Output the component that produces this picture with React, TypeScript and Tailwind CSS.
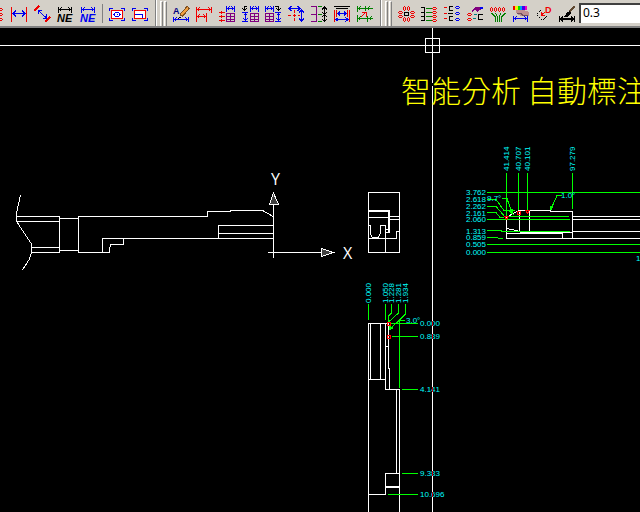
import type { ReactNode } from 'react';

const RED = '#f00000';
const BLUE = '#0000f0';
const BLACK = '#000000';
const GREEN = '#008000';
const PURPLE = '#800080';

type Tool = { label: string; art: ReactNode };

// horizontal dimension with end ticks
const Dim = ({ x1, x2, y, c, h = 3 }: { x1: number; x2: number; y: number; c: string; h?: number }) => (
  <path
    stroke={c}
    d={`M${x1} ${y - h}V${y + h}M${x2} ${y - h}V${y + h}M${x1} ${y}H${x2}M${x1 + 3} ${y - 2}L${x1 + 1} ${y}L${x1 + 3} ${y + 2}M${x2 - 3} ${y - 2}L${x2 - 1} ${y}L${x2 - 3} ${y + 2}`}
  />
);

const Grid = ({ x }: { x: number }) => (
  <path stroke={PURPLE} d={`M${x} 13.5H${x + 8}V21.5H${x}ZM${x + 4} 13V21M${x} 16.5H${x + 8}M${x} 19.5H${x + 8}`} />
);

const Corners = () => (
  <path stroke={BLUE} d="M3.5 11V8.5H7M15 8.5H18.5V11M18.5 18V20.5H15M7 20.5H3.5V18" />
);

// flat rings, 5 wide and 3 high
const Rings = ({ x, ys, c }: { x: number; ys: number[]; c: string }) => (
  <>
    {ys.map((y) => (
      <path key={y} stroke={c} d={`M${x - 1} ${y - 0.5}h3M${x - 1} ${y + 1.5}h3M${x - 2} ${y + 0.5}h1M${x + 2} ${y + 0.5}h1`} />
    ))}
  </>
);

// upright rings, 3 wide and 5 high
const Drops = ({ xs, y, c }: { xs: number[]; y: number; c: string }) => (
  <>
    {xs.map((x) => (
      <path key={x} stroke={c} d={`M${x - 0.5} ${y - 1}v3M${x + 1.5} ${y - 1}v3M${x + 0.5} ${y - 2}v1M${x + 0.5} ${y + 2}v1`} />
    ))}
  </>
);

const NeArt = ({ c }: { c: string }) => (
  <>
    <Dim x1={4.5} x2={17.5} y={9.5} c={c} />
    <text x="3" y="22" fill={c} stroke="none" className="font-['Liberation_Sans'] text-[11px] font-bold italic">
      NE
    </text>
  </>
);

const dimensionTools: Tool[] = [
  {
    label: 'Linear dimension',
    art: (
      <>
        <path stroke={RED} d="M3.5 7V22M18.5 7V22" />
        <path stroke={BLUE} d="M4 13.5H18M8 10.5L5 13.5L8 16.5M14 10.5L17 13.5L14 16.5" />
      </>
    ),
  },
  {
    label: 'Aligned dimension',
    art: (
      <>
        <path stroke={RED} d="M3 11L8 6M14 22L19 17" strokeWidth="1.5" />
        <path stroke={BLUE} d="M7 10.5L15.5 18M7 14V10.5H11M15.5 14V18H12" />
      </>
    ),
  },
  { label: 'Dimension NE', art: <NeArt c={BLACK} /> },
  { label: 'Dimension NE blue', art: <NeArt c={BLUE} /> },
];

const frameTools: Tool[] = [
  {
    label: 'Frame hole',
    art: (
      <>
        <Corners />
        <rect x="5.5" y="10.5" width="11" height="8" fill="#fff" stroke={RED} />
        <path stroke={BLUE} d="M9.5 12.5H12.5L14 14.5L12.5 16.5H9.5L8 14.5ZM10.5 14.5H11.5" />
      </>
    ),
  },
  {
    label: 'Frame step',
    art: (
      <>
        <Corners />
        <rect x="5.5" y="10.5" width="11" height="8" fill="#fff" stroke={RED} />
        <path stroke={BLUE} d="M6 14.5H13.5V18" />
      </>
    ),
  },
];

const editTools: Tool[] = [
  {
    label: 'Edit dimension text',
    art: (
      <>
        <text x="3" y="14" fill="#000080" stroke="none" className="font-['Liberation_Sans'] text-[9px] font-bold">
          A
        </text>
        <path stroke="#805020" strokeWidth="4" d="M11 16L18.5 7" />
        <path stroke="#f0a040" strokeWidth="2" d="M11.5 15L18 7.5" />
        <path stroke={BLACK} d="M8.5 18.5L11 17" />
        <Dim x1={3.5} x2={18.5} y={19.5} c={BLUE} h={2.5} />
      </>
    ),
  },
  {
    label: 'Baseline dimension',
    art: (
      <>
        <path stroke={RED} d="M3.5 7V22M13.5 13V22" />
        <Dim x1={3.5} x2={18.5} y={9.5} c={RED} />
        <Dim x1={3.5} x2={13.5} y={16.5} c={RED} />
      </>
    ),
  },
  {
    label: 'Ordinate left',
    art: (
      <>
        <Dim x1={10.5} x2={18.5} y={8.5} c={BLUE} />
        <Grid x={10.5} />
        <path stroke={RED} d="M3 12.5H9M3 16.5H9M3 20.5H9M5.5 11V14M5.5 15V18M5.5 19V22" />
      </>
    ),
  },
  {
    label: 'Ordinate turn left',
    art: (
      <>
        <Dim x1={11.5} x2={19.5} y={8.5} c={BLUE} />
        <Grid x={11.5} />
        <path stroke={BLACK} d="M8 6.5H5.5V10.5M3.5 8.5L5.5 10.5L7.5 8.5" />
        <path stroke={BLUE} d="M3 12.5H9M3 21.5H9M6.5 13V21M4.5 15.5L6.5 13.5L8.5 15.5M4.5 18.5L6.5 20.5L8.5 18.5" />
      </>
    ),
  },
  {
    label: 'Ordinate turn right',
    art: (
      <>
        <Dim x1={3.5} x2={11.5} y={8.5} c={BLUE} />
        <Grid x={3.5} />
        <path stroke={BLACK} d="M13 6.5H16.5V10.5M14.5 8.5L16.5 10.5L18.5 8.5" />
        <path stroke={BLUE} d="M13 12.5H19M13 21.5H19M16.5 13V21M14.5 15.5L16.5 13.5L18.5 15.5M14.5 18.5L16.5 20.5L18.5 18.5" />
      </>
    ),
  },
  {
    label: 'Center offset',
    art: (
      <>
        <path stroke={BLUE} d="M4 8.5H15M6.5 6L4 8.5L6.5 11M12.5 6L15 8.5L12.5 11M16.5 10V21M14 12.5L16.5 10L19 12.5M14 18.5L16.5 21L19 18.5" />
        <path stroke={RED} d="M9.5 10V13M9.5 14V17M9.5 18V21M3 15.5H6M8 15.5H11M13 15.5H15" />
      </>
    ),
  },
  {
    label: 'Chain vertical',
    art: (
      <>
        <path stroke={PURPLE} d="M3 6.5H8.5V21.5H3M3 14.5H8" />
        <path stroke={GREEN} d="M10 6.5H14M10 14.5H14M10 21.5H14" />
        <path stroke={BLACK} d="M16.5 7V21M14 9.5L16.5 7L19 9.5M14 12L16.5 14.5L19 12M14 17L16.5 14.5L19 17M14 19L16.5 21.5L19 19" />
      </>
    ),
  },
  {
    label: 'Overall width',
    art: (
      <>
        <path stroke={BLACK} d="M3 6.5H19M5 8.5H17" />
        <path stroke={RED} d="M3.5 10V22M5.5 10V17M16.5 10V17M18.5 10V22" />
        <path stroke={BLUE} d="M7 13.5H15M9 11.5L7 13.5L9 15.5M13 11.5L15 13.5L13 15.5M5 19.5H17M7.5 17.5L5 19.5L7.5 21.5M14.5 17.5L17 19.5L14.5 21.5" />
      </>
    ),
  },
  {
    label: 'Split dimensions',
    art: (
      <>
        <path stroke={GREEN} d="M3.5 6V12M3.5 15V22M11.5 6V11M13.5 16V22M4 8.5H19M6.5 6.5L4.5 8.5L6.5 10.5M15.5 6.5L13.5 8.5L15.5 10.5M4 18.5H19M6.5 16.5L4.5 18.5L6.5 20.5M17.5 16.5L15.5 18.5L17.5 20.5" />
        <path stroke={RED} d="M6.5 17.5L12 12M7.5 12.5H12.5V17" />
      </>
    ),
  },
];

const annotateTools: Tool[] = [
  {
    label: 'Radial balloons',
    art: (
      <>
        <rect x="9.5" y="12.5" width="4" height="3" stroke={BLACK} />
        <Drops xs={[9, 13]} y={8} c={RED} />
        <Drops xs={[9, 13]} y={19} c={RED} />
        <Rings x={5} ys={[12, 16]} c={RED} />
        <Rings x={17} ys={[12, 16]} c={RED} />
      </>
    ),
  },
  {
    label: 'Balloon column',
    art: (
      <>
        <path stroke={BLACK} d="M3 7.5H6.5V20.5H3M3 12.5H6M3 16.5H6" />
        <path stroke={GREEN} d="M8 8.5H14M8 12.5H14M8 16.5H14M8 20.5H14" />
        <Rings x={16} ys={[8, 12, 16, 20]} c={RED} />
      </>
    ),
  },
  {
    label: 'Balloon list',
    art: (
      <>
        <path stroke={RED} d="M3 7.5H6M3 13.5H6M3 18.5H6" />
        <path stroke={BLACK} d="M12 6.5H8.5V10.5H12M7 13.5H12M12 16.5H8.5V20.5H12" />
        <Rings x={16} ys={[7, 13, 19]} c={BLUE} />
      </>
    ),
  },
  {
    label: 'Pick balloons',
    art: (
      <>
        <path fill={PURPLE} stroke="none" d="M7 11L11 7H16L18 9L15 10L13 12L11 10L8 12Z" />
        <path stroke={BLUE} strokeWidth="2" d="M16 8H19" />
        <path stroke="#008080" d="M10 14.5H13M9 18.5H12" />
        <path stroke={BLACK} d="M19 14.5H14.5V19.5H19" />
        <Rings x={5} ys={[14, 19]} c={RED} />
      </>
    ),
  },
  {
    label: 'Fan balloons',
    art: (
      <>
        <Drops xs={[4, 8, 12, 16]} y={9} c={RED} />
        <path stroke={GREEN} d="M4.5 13L8.5 17V22M8.5 13L10.5 17V22M13.5 13L12.5 17V22M18.5 13L14.5 17V22" />
      </>
    ),
  },
  {
    label: 'Dimension colour',
    art: (
      <>
        <path stroke={RED} strokeWidth="4" d="M3 8H5" />
        <path stroke="#f0f000" strokeWidth="4" d="M5 8H8" />
        <path stroke="#00e000" strokeWidth="4" d="M8 8H10" />
        <path stroke="#00a0f0" strokeWidth="4" d="M10 8H12" />
        <path stroke="#4000f0" strokeWidth="4" d="M12 8H15" />
        <path stroke="#f000c0" strokeWidth="4" d="M15 8H17" />
        <path fill="#c09090" stroke="none" d="M6 10H14L19 12V16H11L6 13Z" />
        <path stroke="#705060" d="M7 13.5H11L13 15.5H18" />
        <Dim x1={3.5} x2={17.5} y={18.5} c={BLUE} />
      </>
    ),
  },
  {
    label: 'Diameter note',
    art: (
      <>
        <path stroke={BLACK} strokeDasharray="2 1" d="M7.5 10.5L3.5 14.5L9.5 20.5L13.5 16.5" />
        <path stroke={RED} d="M8 15.5L12.5 11.5M8.5 12V15.5H12" />
        <text x="12" y="13" fill={RED} stroke="none" className="font-['Liberation_Sans'] text-[9px] font-bold">
          D
        </text>
      </>
    ),
  },
  {
    label: 'Dimension brush',
    art: (
      <>
        <path stroke="#604830" strokeWidth="2" d="M18.5 6L13.5 12" />
        <path fill={BLACK} stroke="none" d="M14 11L15 13L12 17L7 17L10 15L11 12Z" />
        <path stroke={BLACK} strokeWidth="1.5" d="M3.5 16V22M18.5 16V22M3.5 19H18.5M7 17L4.5 19L7 21M15 17L17.5 19L15 21" />
      </>
    ),
  },
];

const Art = ({ children }: { children: ReactNode }) => (
  <svg width="23" height="25" viewBox="0 0 23 25" fill="none" strokeWidth="1" shapeRendering="crispEdges" className="shrink-0">
    {children}
  </svg>
);

const ToolButtons = ({ tools }: { tools: Tool[] }) => (
  <>
    {tools.map((tool) => (
      <button key={tool.label} type="button" aria-label={tool.label} className="h-[25px] shrink-0">
        <Art>{tool.art}</Art>
      </button>
    ))}
  </>
);

const Grip = () => (
  <div className="flex shrink-0 gap-px px-[3px] pt-px">
    <span className="w-[3px] border-t border-r border-l border-t-white border-r-[#808080] border-l-white bg-[#d4d0c8]" />
    <span className="w-[3px] border-t border-r border-l border-t-white border-r-[#808080] border-l-white bg-[#d4d0c8]" />
  </div>
);

const Toolbar = () => (
  <header className="flex h-7 shrink-0 overflow-hidden border-b-2 border-[#808080] bg-[#d4d0c8]">
    <div className="flex shrink-0 border-r border-[#808080] pr-[3px]">
      <button type="button" aria-label="Stacked balloons" className="flex h-[25px] w-2 shrink-0 justify-end overflow-hidden">
        <Art>
          <Rings x={15} ys={[9, 14, 19]} c={RED} />
        </Art>
      </button>
      <ToolButtons tools={dimensionTools} />
      <span className="mt-1 mr-[3px] ml-0.5 h-[19px] w-px shrink-0 bg-[#808080]" />
      <ToolButtons tools={frameTools} />
    </div>
    <div className="flex shrink-0 border-r border-l border-r-[#808080] border-l-white pr-[3px]">
      <Grip />
      <ToolButtons tools={editTools} />
    </div>
    <div className="flex min-w-0 flex-1 border-l border-white">
      <Grip />
      <ToolButtons tools={annotateTools} />
      <input
        aria-label="Dimension scale"
        defaultValue="0.3"
        className="mt-[3px] h-5 min-w-0 flex-1 border-t-2 border-l-2 border-[#404040] bg-white pb-[3px] pl-0.5 font-['Noto_Sans'] text-[12px] leading-4 text-black outline-none"
      />
    </div>
  </header>
);

const verticalLabels = [
  { x: 509, y: 171, text: '41.414' },
  { x: 521, y: 171, text: '40.707' },
  { x: 530, y: 171, text: '40.101' },
  { x: 575, y: 171, text: '97.279' },
];

const sectionLabels = [
  { x: 371, text: '0.000' },
  { x: 388, text: '1.050' },
  { x: 394, text: '1.228' },
  { x: 401, text: '1.281' },
  { x: 408, text: '1.934' },
];

const heightLabels = [
  { y: 195, text: '3.762' },
  { y: 202, text: '2.618' },
  { y: 209, text: '2.262' },
  { y: 216, text: '2.161' },
  { y: 222, text: '2.060' },
  { y: 234, text: '1.313' },
  { y: 240, text: '0.859' },
  { y: 247, text: '0.505' },
  { y: 255, text: '0.000' },
];

const depthLabels = [
  { y: 326, text: '0.000' },
  { y: 339, text: '0.889' },
  { y: 392, text: '4.141' },
  { y: 476, text: '9.383' },
  { y: 497, text: '10.696' },
];

const Drawing = () => (
  <svg viewBox="0 28 640 484" className="block w-full bg-black" fill="none" shapeRendering="crispEdges">
    <g stroke="#ffffff">
      {/* side view */}
      <path d="M20.5 195L18.5 204L16.5 213V221L19.5 226L25.5 235L31.5 244V252L29.5 259L22.5 270" />
      <path d="M17 216.5H59.5V252.5H31M17 221.5H59M31 247.5H59M59 218.5H78M59 250.5H78" />
      <path d="M207.5 216.5H78.5V252.5H109.5V249L110.5 244.5H123.5V238.5M102.5 252V238.5H273" />
      <path d="M207.5 217V211.5H230V210.5H262.5L273 216.5M218.5 238V225.5H273M218 233.5H273" />
      {/* axes */}
      <path d="M273.5 204V258M268 252.5H321" />
      <path fill="#404040" d="M273.5 193L269.5 204.5H278.5ZM333 252.5L321.5 248.5V256.5Z" />
      {/* front view */}
      <path d="M368.5 192.5H399.5V252.5H368.5ZM368 217.5H388M389 216.5H399M389 219.5H399M368 238.5H396.5V231.5H399" />
      <path strokeWidth="2" d="M368 211H389V233" />
      <path d="M368 225.5H370.5V234L372.5 237.5H378.5L380.5 233V225.5H385.5V252M385 229.5H388M385 232.5H389" />
      {/* bottom view */}
      <path d="M368.5 512V323.5H388.5V368H389.5V389M370.5 323V379M380.5 323V379M368 379.5H385M385.5 323V389.5H399.5V512M385 346.5H388M396.5 389V473M399 473.5H385.5V494.5H368" />
      <path strokeWidth="2" d="M385 487H399" />
      {/* tip detail */}
      <path d="M506.5 238V218L511 214.5L519 210.5H550V211.5H572.5V238M519.5 211V231M529.5 211V232M572 216.5H640M572 219.5H640M572 231.5H640M520 232.5H572M506 238.5H640M506 233.5H562.5V238M506 228.5L512 229.5L520 231.5" />
    </g>

    <g stroke="#00ff00">
      <path d="M506.5 173V217M518.5 173V210M527.5 173V210M572.5 173V209" />
      <path d="M487 192.5H640M508 216.5H569M487 219.5H570M487 230.5H500L503 231.5H570M487 237.5H497L499 238.5H503M487 244.5H640M487 252.5H640" />
      <path d="M487 199.5H496L504 210.5H515M487 206.5H496L506 218M487 212.5H496L500 217.5H504M502 198.5H507L512 213M562 195.5H557L551 209" />
      <path fill="#00ff00" d="M551 210L550.5 206L553 206ZM513 214L509 211L512 209Z" />
      <path d="M368.5 304V320M385.5 304V320M391.5 304V313L388.5 316V323M398.5 304V313L388.5 322M405.5 304V314L390 329M405 320.5H399.5V388M399 320.5L391 328" />
      <path d="M391 323.5H418M392 336.5H418M402 389.5H418M402 473.5H418M388 494.5H418" />
      <path fill="#00ff00" d="M389.5 329.5V326L392.5 328Z" />
    </g>
    <path stroke="#ff0000" d="M387.5 322.5H390.5V325H387.5ZM387.5 335.5H390.5V338H387.5ZM504.5 216.5H508.5L506.5 219ZM517.5 211.5H520.5V214H517.5ZM525.5 210.5H529.5L527.5 213Z" />

    {/* crosshair cursor */}
    <path stroke="#ffffff" d="M0 45.5H640M432.5 28V83M432.5 86V512M425.5 38.5H439.5V52.5H425.5Z" />

    <g fill="#ffffff" className="font-['Open_Sans'] text-[16px]">
      <text x="271" y="185">Y</text>
      <text x="343" y="259">X</text>
    </g>

    <g fill="#ffff00" className="font-['Noto_Sans_CJK_TC',sans-serif] text-[30px] font-light">
      <text x="401" y="102">智能分析</text>
      <text x="527" y="102">自動標注</text>
    </g>

    <g fill="#00ffff" className="font-['Liberation_Sans'] text-[8px]">
      {verticalLabels.map((l) => (
        <text key={l.text} transform={`translate(${l.x} ${l.y}) rotate(-90)`}>{l.text}</text>
      ))}
      {heightLabels.map((l) => (
        <text key={l.y} x="466" y={l.y}>{l.text}</text>
      ))}
      {sectionLabels.map((l) => (
        <text key={l.x} transform={`translate(${l.x} 303) rotate(-90)`}>{l.text}</text>
      ))}
      {depthLabels.map((l) => (
        <text key={l.y} x="420" y={l.y}>{l.text}</text>
      ))}
      <text x="487" y="201">9.7°</text>
      <text x="561" y="198">1.0°</text>
      <text x="406" y="323">3.0°</text>
      <text x="636" y="261">1</text>
    </g>
    <path stroke="#c00000" d="M432.5 321V326M432.5 334V339M432.5 387V392M432.5 471V476M432.5 492V497" />
  </svg>
);

const App = () => (
  <div className="flex min-h-screen flex-col overflow-hidden bg-black">
    <Toolbar />
    <main className="flex-1">
      <Drawing />
    </main>
  </div>
);

export default App;
